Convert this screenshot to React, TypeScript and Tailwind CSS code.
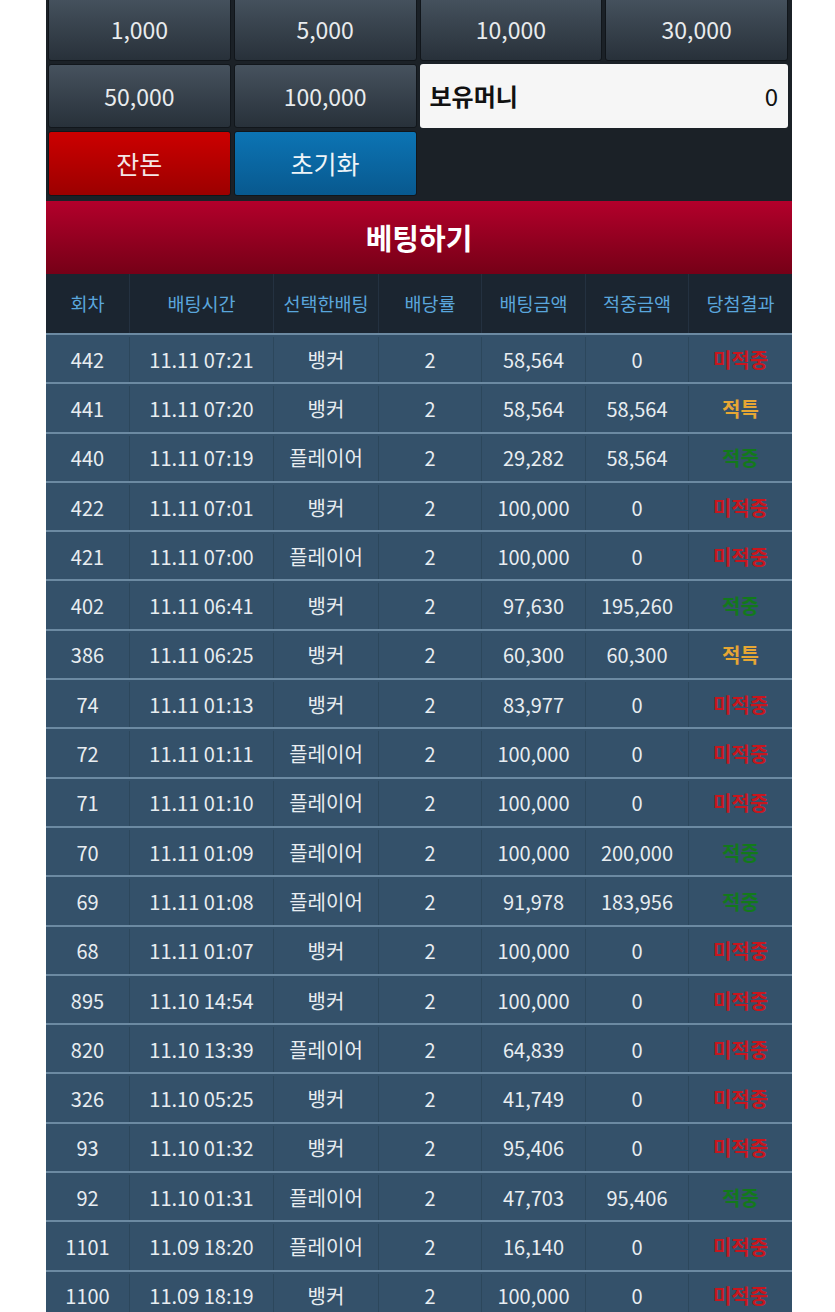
import React from 'react';

type Row = {
  no: string;
  time: string;
  pick: string;
  odds: string;
  amount: string;
  win: string;
  result: '미적중' | '적중' | '적특';
};

const rows: Row[] = [
  { no: '442', time: '11.11 07:21', pick: '뱅커', odds: '2', amount: '58,564', win: '0', result: '미적중' },
  { no: '441', time: '11.11 07:20', pick: '뱅커', odds: '2', amount: '58,564', win: '58,564', result: '적특' },
  { no: '440', time: '11.11 07:19', pick: '플레이어', odds: '2', amount: '29,282', win: '58,564', result: '적중' },
  { no: '422', time: '11.11 07:01', pick: '뱅커', odds: '2', amount: '100,000', win: '0', result: '미적중' },
  { no: '421', time: '11.11 07:00', pick: '플레이어', odds: '2', amount: '100,000', win: '0', result: '미적중' },
  { no: '402', time: '11.11 06:41', pick: '뱅커', odds: '2', amount: '97,630', win: '195,260', result: '적중' },
  { no: '386', time: '11.11 06:25', pick: '뱅커', odds: '2', amount: '60,300', win: '60,300', result: '적특' },
  { no: '74', time: '11.11 01:13', pick: '뱅커', odds: '2', amount: '83,977', win: '0', result: '미적중' },
  { no: '72', time: '11.11 01:11', pick: '플레이어', odds: '2', amount: '100,000', win: '0', result: '미적중' },
  { no: '71', time: '11.11 01:10', pick: '플레이어', odds: '2', amount: '100,000', win: '0', result: '미적중' },
  { no: '70', time: '11.11 01:09', pick: '플레이어', odds: '2', amount: '100,000', win: '200,000', result: '적중' },
  { no: '69', time: '11.11 01:08', pick: '플레이어', odds: '2', amount: '91,978', win: '183,956', result: '적중' },
  { no: '68', time: '11.11 01:07', pick: '뱅커', odds: '2', amount: '100,000', win: '0', result: '미적중' },
  { no: '895', time: '11.10 14:54', pick: '뱅커', odds: '2', amount: '100,000', win: '0', result: '미적중' },
  { no: '820', time: '11.10 13:39', pick: '플레이어', odds: '2', amount: '64,839', win: '0', result: '미적중' },
  { no: '326', time: '11.10 05:25', pick: '뱅커', odds: '2', amount: '41,749', win: '0', result: '미적중' },
  { no: '93', time: '11.10 01:32', pick: '뱅커', odds: '2', amount: '95,406', win: '0', result: '미적중' },
  { no: '92', time: '11.10 01:31', pick: '플레이어', odds: '2', amount: '47,703', win: '95,406', result: '적중' },
  { no: '1101', time: '11.09 18:20', pick: '플레이어', odds: '2', amount: '16,140', win: '0', result: '미적중' },
  { no: '1100', time: '11.09 18:19', pick: '뱅커', odds: '2', amount: '100,000', win: '0', result: '미적중' },
];

const headers = ['회차', '배팅시간', '선택한배팅', '배당률', '배팅금액', '적중금액', '당첨결과'];

// column widths taken from the screenshot
const cols = 'grid grid-cols-[83px_144px_105px_103px_104px_103px_104px]';

const resultColor = {
  미적중: 'text-[#c8161e]',
  적중: 'text-[#13791c]',
  적특: 'text-[#e6a634]',
};

function ChipButton({ label }: { label: string }) {
  return (
    <button className="flex h-[64px] items-center justify-center rounded-[3px] border border-[#11161b] bg-gradient-to-b from-[#46525e] to-[#28313a] text-[23px] text-[#e9ecee]">
      {label}
    </button>
  );
}

export default function App() {
  return (
    <div
      className="min-h-[1312px] bg-white"
      style={{ fontFamily: '"Noto Sans CJK KR", "Noto Sans", sans-serif' }}
    >
      <div className="mx-[46px] w-[746px] overflow-hidden">
        {/* chip buttons */}
        <div className="bg-[#1b2127] pb-[5px] pl-[2px] pr-[4px]">
          <div className="-mt-[3px] grid grid-cols-4 gap-x-[3px] gap-y-[3px]">
            <ChipButton label="1,000" />
            <ChipButton label="5,000" />
            <ChipButton label="10,000" />
            <ChipButton label="30,000" />
            <ChipButton label="50,000" />
            <ChipButton label="100,000" />
            <div className="col-span-2 flex h-[64px] items-center justify-between rounded-[3px] bg-[#f6f6f6] px-[10px] text-[24px] text-[#111]">
              <span className="font-bold">보유머니</span>
              <span>0</span>
            </div>
            <button className="flex h-[65px] items-center justify-center rounded-[3px] border border-[#11161b] bg-gradient-to-b from-[#cc0000] to-[#9c0000] text-[25px] text-[#f4e6e6]">
              잔돈
            </button>
            <button className="flex h-[65px] items-center justify-center rounded-[3px] border border-[#11161b] bg-gradient-to-b from-[#0c74b4] to-[#08598f] text-[25px] text-[#eef4f8]">
              초기화
            </button>
          </div>
        </div>

        {/* title */}
        <div className="flex h-[73px] items-center justify-center bg-gradient-to-b from-[#b3002b] to-[#760017] text-[29px] font-bold text-white">
          베팅하기
        </div>

        {/* table */}
        <div className={`${cols} h-[59px] bg-[#1b2530]`}>
          {headers.map((h, i) => (
            <div
              key={h}
              className={`flex items-center justify-center text-[18.5px] text-[#5aa6dc] ${
                i > 0 ? 'border-l border-[#243140]' : ''
              }`}
            >
              {h}
            </div>
          ))}
        </div>
        <div className="bg-[#34516a]">
          {rows.map((r) => (
            <div
              key={r.no + r.time}
              className={`${cols} h-[49.3px] border-t-[2px] border-[#6c8aa2] pt-[2px] text-[20px] text-[#e8edf1]`}
            >
              <div className="flex items-center justify-center">{r.no}</div>
              <div className="flex items-center justify-center border-l border-[#2c475c]">{r.time}</div>
              <div className="flex items-center justify-center border-l border-[#2c475c]">{r.pick}</div>
              <div className="flex items-center justify-center border-l border-[#2c475c]">{r.odds}</div>
              <div className="flex items-center justify-center border-l border-[#2c475c]">{r.amount}</div>
              <div className="flex items-center justify-center border-l border-[#2c475c]">{r.win}</div>
              <div
                className={`flex items-center justify-center border-l border-[#2c475c] font-bold ${resultColor[r.result]}`}
              >
                {r.result}
              </div>
            </div>
          ))}
        </div>
      </div>
    </div>
  );
}
